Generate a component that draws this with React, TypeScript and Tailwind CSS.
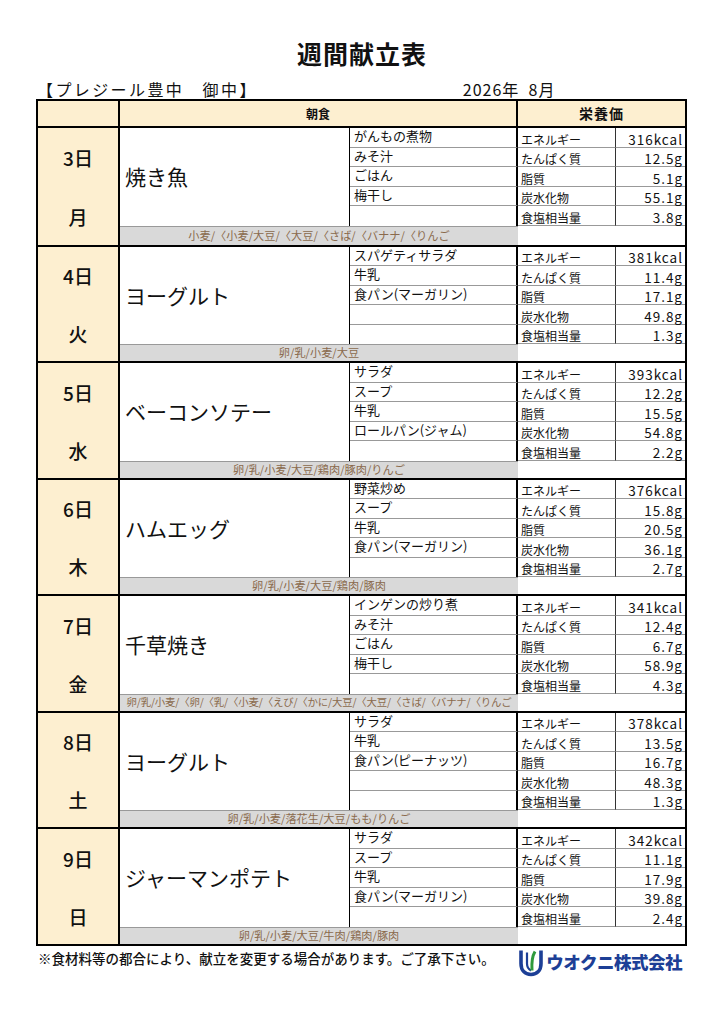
const days = [
  {
    date: '3日', week: '月', main: '焼き魚',
    sides: ['がんもの煮物', 'みそ汁', 'ごはん', '梅干し', ''],
    nutr: ['316kcal', '12.5g', '5.1g', '55.1g', '3.8g'],
    allergen: '小麦/〈小麦/大豆/〈大豆/〈さば/〈バナナ/〈りんご',
  },
  {
    date: '4日', week: '火', main: 'ヨーグルト',
    sides: ['スパゲティサラダ', '牛乳', '食パン(マーガリン)', '', ''],
    nutr: ['381kcal', '11.4g', '17.1g', '49.8g', '1.3g'],
    allergen: '卵/乳/小麦/大豆',
  },
  {
    date: '5日', week: '水', main: 'ベーコンソテー',
    sides: ['サラダ', 'スープ', '牛乳', 'ロールパン(ジャム)', ''],
    nutr: ['393kcal', '12.2g', '15.5g', '54.8g', '2.2g'],
    allergen: '卵/乳/小麦/大豆/鶏肉/豚肉/りんご',
  },
  {
    date: '6日', week: '木', main: 'ハムエッグ',
    sides: ['野菜炒め', 'スープ', '牛乳', '食パン(マーガリン)', ''],
    nutr: ['376kcal', '15.8g', '20.5g', '36.1g', '2.7g'],
    allergen: '卵/乳/小麦/大豆/鶏肉/豚肉',
  },
  {
    date: '7日', week: '金', main: '千草焼き',
    sides: ['インゲンの炒り煮', 'みそ汁', 'ごはん', '梅干し', ''],
    nutr: ['341kcal', '12.4g', '6.7g', '58.9g', '4.3g'],
    allergen: '卵/乳/小麦/〈卵/〈乳/〈小麦/〈えび/〈かに/大豆/〈大豆/〈さば/〈バナナ/〈りんご',
    small: true,
  },
  {
    date: '8日', week: '土', main: 'ヨーグルト',
    sides: ['サラダ', '牛乳', '食パン(ピーナッツ)', '', ''],
    nutr: ['378kcal', '13.5g', '16.7g', '48.3g', '1.3g'],
    allergen: '卵/乳/小麦/落花生/大豆/もも/りんご',
  },
  {
    date: '9日', week: '日', main: 'ジャーマンポテト',
    sides: ['サラダ', 'スープ', '牛乳', '食パン(マーガリン)', ''],
    nutr: ['342kcal', '11.1g', '17.9g', '39.8g', '2.4g'],
    allergen: '卵/乳/小麦/大豆/牛肉/鶏肉/豚肉',
  },
];

const labels = ['エネルギー', 'たんぱく質', '脂質', '炭水化物', '食塩相当量'];

type Day = { date: string; week: string; main: string; sides: string[]; nutr: string[]; allergen: string; small?: boolean };

function DayBlock({ day, first }: { day: Day; first: boolean }) {
  return (
    <div
      className={`grid h-[116.5px] grid-cols-[82px_230px_168px_98px_1fr] grid-rows-[19.5px_19.5px_19.5px_19.5px_19.5px_1fr] ${
        first ? '' : 'border-t-2 border-black'
      }`}
    >
      <div className="row-span-6 flex flex-col items-center justify-around border-r-2 border-black bg-[#fdefd0] text-[19px] font-medium leading-none text-[#111]">
        <span className="pt-[2px]">{day.date}</span>
        <span className="pt-[4px]">{day.week}</span>
      </div>
      <div className="col-start-2 row-span-5 row-start-1 flex items-center border-r border-black pl-[5px] text-[21px] text-[#111]">
        {day.main}
      </div>
      {day.sides.map((s, i) => (
        <div
          key={i}
          className={`col-start-3 border-r-2 border-black pl-[4px] text-[13px] leading-[16px] text-[#111] ${
            i < 4 ? 'border-b border-b-[#999]' : ''
          }`}
          style={{ gridRowStart: i + 1 }}
        >
          {s}
        </div>
      ))}
      {labels.map((l, i) => (
        <div
          key={l}
          className="col-start-4 flex items-end border-r border-b border-r-[#333] border-b-[#999] pl-[3px] text-[12px] leading-[15px] text-[#111]"
          style={{ gridRowStart: i + 1 }}
        >
          {l}
        </div>
      ))}
      {day.nutr.map((n, i) => (
        <div
          key={i}
          className="col-start-5 flex items-end justify-end border-b border-b-[#999] pr-[2px] text-[13.5px] leading-[16px] tracking-[1px] text-[#111]"
          style={{ gridRowStart: i + 1 }}
        >
          {n}
        </div>
      ))}
      <div
        className={`col-span-2 col-start-2 row-start-6 flex items-center justify-center overflow-hidden whitespace-nowrap border-t border-t-[#999] bg-[#d9d9d9] leading-none text-[#8a6a4c] ${
          day.small ? 'text-[10.4px] tracking-[-0.15px]' : 'text-[11.2px]'
        }`}
      >
        {day.allergen}
      </div>
      <div className="col-span-2 col-start-4 row-start-6 bg-white" />
    </div>
  );
}

function Logo() {
  return (
    <div className="flex items-center gap-[2px]">
      <svg width="26" height="29" viewBox="0 0 26 28">
        <path d="M3 2 L3 15 C3 22 7 26 13 26 C19 26 23 22 23 15 L23 2" fill="none" stroke="#1d3f96" strokeWidth="3.6" />
        <path d="M9 4 L9 15 C9 19 11 21 13 22" fill="none" stroke="#1d3f96" strokeWidth="2.2" />
        <path d="M17 3 C14 8 13.5 14 14 22" fill="none" stroke="#2f9a3c" strokeWidth="3" />
      </svg>
      <span className="text-[17.5px] font-black leading-none tracking-[-0.5px] text-[#1d3f96]">ウオクニ株式会社</span>
    </div>
  );
}

export default function App() {
  return (
    <div
      className="min-h-[1024px] w-[724px] bg-white px-[36px] pt-[38px] text-[#111]"
      style={{ fontFamily: '"Noto Sans CJK JP", "Noto Sans", sans-serif' }}
    >
      <h1 className="text-center text-[25px] font-bold leading-[30px] tracking-[1px]">週間献立表</h1>
      <div className="mt-[11px] flex h-[20px] items-center text-[16px] leading-none">
        <span className="pl-[1px] tracking-[2.4px]">【プレジール豊中　御中】</span>
        <span className="ml-[205px] tracking-[1px]">2026年&nbsp;&nbsp;8月</span>
      </div>
      <div className="w-[651px] border-2 border-black">
        <div className="grid h-[27px] grid-cols-[82px_398px_1fr] border-b-2 border-black bg-[#fdefd0]">
          <div className="border-r-2 border-black" />
          <div className="flex items-center justify-center border-r-2 border-black text-[12px] font-semibold">朝食</div>
          <div className="flex items-center justify-center text-[14px] font-semibold tracking-[1px]">栄養価</div>
        </div>
        {days.map((d, i) => (
          <DayBlock key={d.date} day={d} first={i === 0} />
        ))}
      </div>
      <div className="mt-[1px] flex items-start justify-between">
        <p className="pl-[2px] pt-[5px] text-[13.5px] font-medium leading-none">
          ※食材料等の都合により、献立を変更する場合があります。ご了承下さい。
        </p>
        <div className="pr-[6px] pt-[1px]">
          <Logo />
        </div>
      </div>
    </div>
  );
}
